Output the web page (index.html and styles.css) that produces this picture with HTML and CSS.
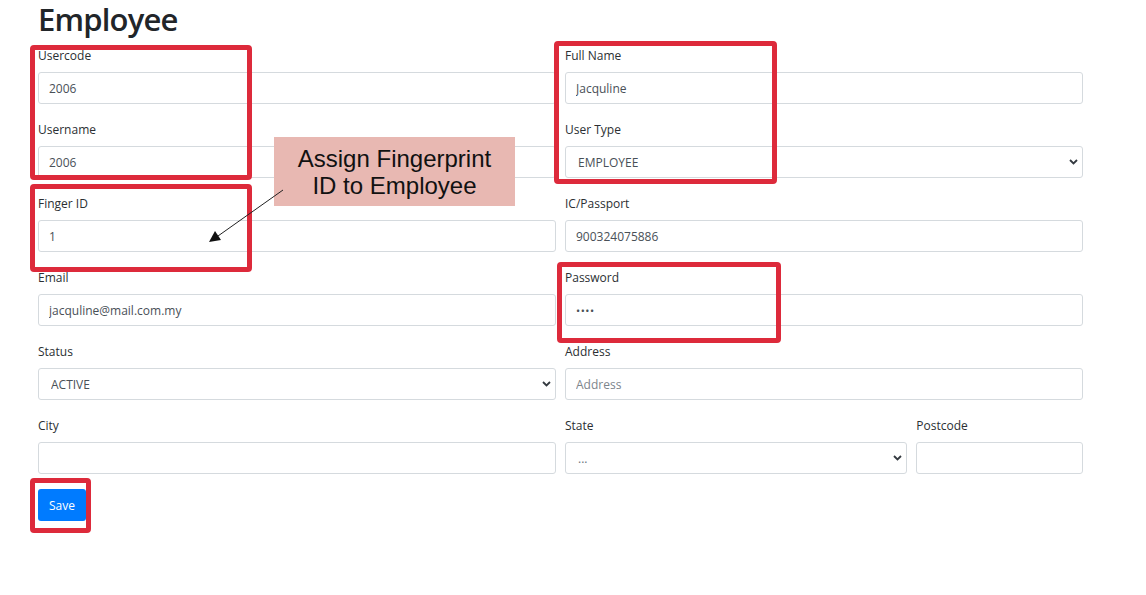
FILE: index.html
```html
<!DOCTYPE html>
<html lang="en">
<head>
    <meta charset="UTF-8">
    <meta name="viewport" content="width=device-width, initial-scale=1.0">
    <title>Employee</title>
    <link rel="stylesheet" href="styles.css">
</head>
<body>
    <div class="page">
        <h1>Employee</h1>
        <form class="form">
            <div class="group span-6">
                <label for="usercode">Usercode</label>
                <input type="text" id="usercode" value="2006">
            </div>
            <div class="group span-6">
                <label for="fullname">Full Name</label>
                <input type="text" id="fullname" value="Jacquline">
            </div>
            <div class="group span-6">
                <label for="username">Username</label>
                <input type="text" id="username" value="2006">
            </div>
            <div class="group span-6">
                <label for="usertype">User Type</label>
                <div class="select">
                    <select id="usertype"><option>EMPLOYEE</option></select>
                    <svg class="chevron" width="9" height="6" viewBox="0 0 9 6"><path d="M1 1l3.5 3.5L8 1" fill="none" stroke="#343a40" stroke-width="1.8"/></svg>
                </div>
            </div>
            <div class="group span-6">
                <label for="fingerid">Finger ID</label>
                <input type="text" id="fingerid" value="1">
            </div>
            <div class="group span-6">
                <label for="ic">IC/Passport</label>
                <input type="text" id="ic" value="900324075886">
            </div>
            <div class="group span-6">
                <label for="email">Email</label>
                <input type="text" id="email" value="jacquline@mail.com.my">
            </div>
            <div class="group span-6">
                <label for="password">Password</label>
                <input type="password" id="password" value="1234">
            </div>
            <div class="group span-6">
                <label for="status">Status</label>
                <div class="select">
                    <select id="status"><option>ACTIVE</option></select>
                    <svg class="chevron" width="9" height="6" viewBox="0 0 9 6"><path d="M1 1l3.5 3.5L8 1" fill="none" stroke="#343a40" stroke-width="1.8"/></svg>
                </div>
            </div>
            <div class="group span-6">
                <label for="address">Address</label>
                <input type="text" id="address" placeholder="Address">
            </div>
            <div class="group span-6">
                <label for="city">City</label>
                <input type="text" id="city">
            </div>
            <div class="group span-4">
                <label for="state">State</label>
                <div class="select">
                    <select id="state" class="dots"><option>...</option></select>
                    <svg class="chevron" width="9" height="6" viewBox="0 0 9 6"><path d="M1 1l3.5 3.5L8 1" fill="none" stroke="#343a40" stroke-width="1.8"/></svg>
                </div>
            </div>
            <div class="group span-2">
                <label for="postcode">Postcode</label>
                <input type="text" id="postcode">
            </div>
            <div class="actions">
                <button type="submit">Save</button>
            </div>
        </form>

        <!-- annotation overlay -->
        <div class="mark mark-user"></div>
        <div class="mark mark-finger"></div>
        <div class="mark mark-name"></div>
        <div class="mark mark-pass"></div>
        <div class="mark mark-save"></div>
        <div class="callout">Assign Fingerprint<br>ID to Employee</div>
        <svg class="arrow" width="1146" height="595" viewBox="0 0 1146 595">
            <line x1="283" y1="190" x2="218" y2="236" stroke="#222" stroke-width="1"/>
            <polygon points="209,242 215,231 221,240" fill="#111"/>
        </svg>
    </div>
</body>
</html>
```

FILE: styles.css
```css
body {
    margin: 0;
    background: #ffffff;
    font-family: 'Open Sans', 'Noto Sans', sans-serif;
    color: #212529;
}

.page {
    position: relative;
    width: 1146px;
    height: 595px;
    padding: 0 38px;
    box-sizing: border-box;
}

h1 {
    margin: 0 0 7px;
    font-size: 31px;
    font-weight: 600;
    line-height: 38px;
    color: #212529;
    letter-spacing: -0.8px;
}

.form {
    width: 1045px;
    display: grid;
    grid-template-columns: repeat(12, 1fr);
    column-gap: 9px;
}

.span-6 { grid-column: span 6; }
.span-4 { grid-column: span 4; }
.span-2 { grid-column: span 2; }

.group {
    margin-bottom: 15px;
}

.group label {
    display: block;
    font-size: 12px;
    line-height: 21px;
    margin-bottom: 6px;
    color: #2b2f33;
}

.group input,
.group select {
    display: block;
    width: 100%;
    height: 32px;
    box-sizing: border-box;
    padding: 1px 10px 0;
    border: 1px solid #d5dade;
    border-radius: 3px;
    background: #ffffff;
    font-family: inherit;
    font-size: 12px;
    color: #495057;
    outline: none;
}

.group input::placeholder {
    color: #7d858c;
}

.group input[type="password"] {
    font-size: 11px;
    letter-spacing: 0.5px;
}

.select {
    position: relative;
}

.group select {
    appearance: none;
    -webkit-appearance: none;
    padding-left: 12px;
}

.group select.dots {
    color: #6c757d;
}

.chevron {
    position: absolute;
    right: 5px;
    top: 13px;
}

.actions {
    grid-column: span 12;
}

button {
    height: 32px;
    padding: 0 11px;
    border: none;
    border-radius: 3px;
    background-color: #007bff;
    color: #ffffff;
    font-family: inherit;
    font-size: 12px;
    cursor: pointer;
}

.mark {
    position: absolute;
    border: 5px solid #dd2a3b;
    border-radius: 4px;
    box-sizing: border-box;
}

.mark-user { left: 30px; top: 45px; width: 222px; height: 135px; }
.mark-finger { left: 30px; top: 184px; width: 222px; height: 88px; }
.mark-name { left: 554px; top: 41px; width: 223px; height: 143px; }
.mark-pass { left: 557px; top: 262px; width: 224px; height: 81px; }
.mark-save { left: 30px; top: 478px; width: 61px; height: 55px; }

.callout {
    position: absolute;
    left: 274px;
    top: 137px;
    width: 241px;
    height: 69px;
    box-sizing: border-box;
    padding-top: 8px;
    background: #e8b8b2;
    font-family: 'Liberation Sans', Arial, sans-serif;
    font-size: 24px;
    line-height: 27px;
    text-align: center;
    color: #111111;
}

.arrow {
    position: absolute;
    left: 0;
    top: 0;
    pointer-events: none;
}
```
